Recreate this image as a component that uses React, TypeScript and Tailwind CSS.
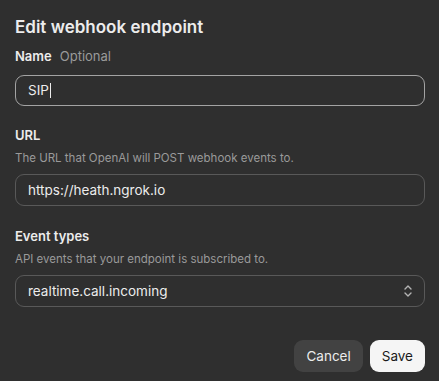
import React from "react";

function Field({
  label,
  hint,
  description,
  className,
  children,
}: {
  label: string;
  hint?: string;
  description?: string;
  className?: string;
  children: React.ReactNode;
}) {
  return (
    <div className={"flex flex-col " + (className ?? "")}>
      <div className="flex items-baseline gap-2 text-[13px] leading-5">
        <span className="font-semibold text-[#ececec]">{label}</span>
        {hint && <span className="text-[#9a9a9a]">{hint}</span>}
      </div>
      {description && (
        <p className="mt-[5px] text-[11.5px] leading-4 text-[#9a9a9a]">{description}</p>
      )}
      <div className={description ? "mt-2" : "mt-[9px]"}>{children}</div>
    </div>
  );
}

export default function App() {
  return (
    <div
      className="h-[381px] w-[439px] bg-[#2f2f2f] px-[15px] pt-[15px] text-[#ececec]"
      style={{ fontFamily: "Inter, 'Noto Sans', sans-serif" }}
    >
      <h2 className="text-[17px] font-semibold leading-6">Edit webhook endpoint</h2>

      <div className="mt-[7px] flex w-[410px] flex-col">
        <Field label="Name" hint="Optional">
          <div className="flex h-[31px] items-center rounded-[9px] border border-[#a3a3a3] px-3 text-[13.5px]">
            SIP
            <span className="ml-px h-[15px] w-px bg-[#ececec]" />
          </div>
        </Field>

        <Field
          className="mt-[19px]"
          label="URL"
          description="The URL that OpenAI will POST webhook events to."
        >
          <div className="flex h-[32px] items-center rounded-[9px] border border-[#595959] px-3 text-[13.5px]">
            https://heath.ngrok.io
          </div>
        </Field>

        <Field
          className="mt-[20px]"
          label="Event types"
          description="API events that your endpoint is subscribed to."
        >
          <div className="flex h-[32px] items-center justify-between rounded-[9px] border border-[#595959] pl-3 pr-[10px] text-[13.5px]">
            <span>realtime.call.incoming</span>
            <svg width="12" height="14" viewBox="0 0 12 14" fill="none">
              <path
                d="M3 5l3-3 3 3M3 9l3 3 3-3"
                stroke="#b4b4b4"
                strokeWidth="1.4"
                strokeLinecap="round"
                strokeLinejoin="round"
              />
            </svg>
          </div>
        </Field>
      </div>

      <div className="mt-[33px] flex w-[410px] justify-end gap-[7px]">
        <button className="h-8 rounded-[9px] bg-[#424242] px-3 text-[13.5px] text-[#ececec]">
          Cancel
        </button>
        <button className="h-8 rounded-[9px] bg-[#f5f5f5] px-3 text-[13.5px] text-[#1a1a1a]">
          Save
        </button>
      </div>
    </div>
  );
}
